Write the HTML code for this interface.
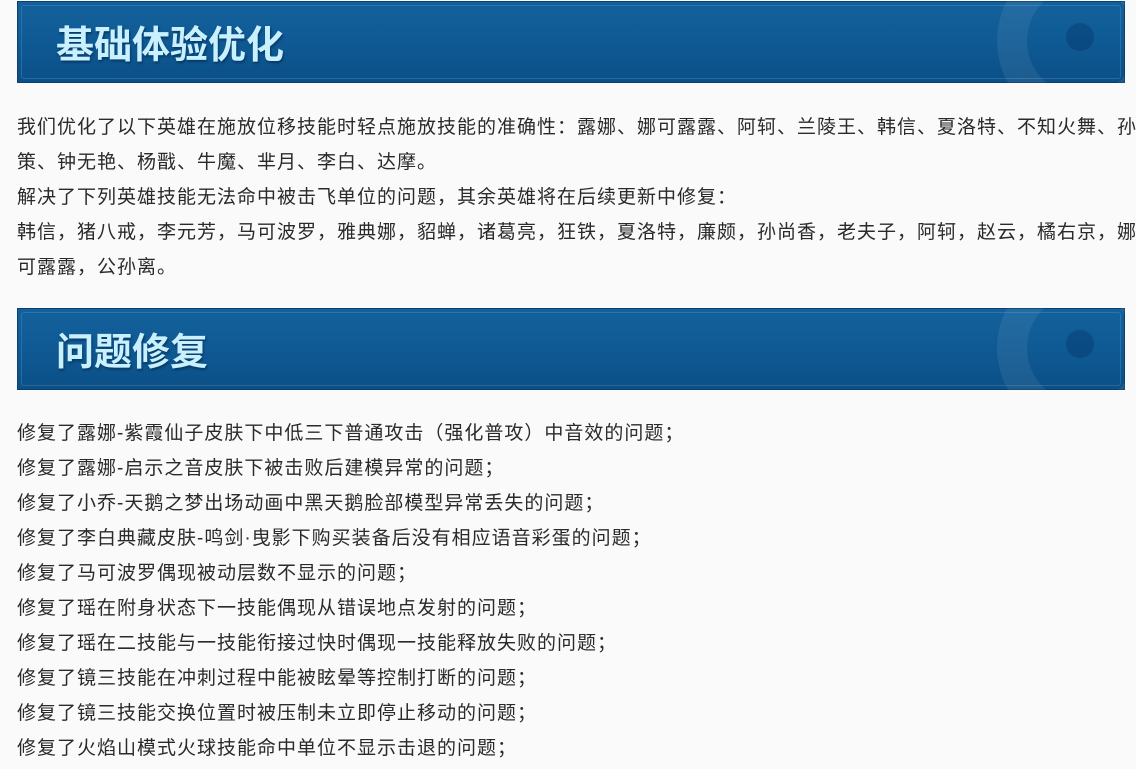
<!DOCTYPE html>
<html><head><meta charset="utf-8"><style>
html,body{margin:0;padding:0;background:#fafafa;width:1136px;height:769px;overflow:hidden}
body{font-family:"Liberation Sans","Noto Sans CJK SC",sans-serif;color:#2a2a2a}
.ban{position:absolute;left:17px;width:1108px;height:82px;background:linear-gradient(180deg,#13619c 0%,#0f5a94 50%,#0b4f86 100%);box-shadow:inset 0 0 0 1px #0a3f6e;overflow:hidden}
.ban:before{content:"";position:absolute;left:4px;top:4px;right:4px;bottom:4px;border:1px solid rgba(120,180,230,.25);border-radius:3px}
.ban .t{position:absolute;left:39px;top:22px;font-size:38px;font-weight:bold;color:#c9f0ff;line-height:46px;text-shadow:1px 2px 2px #063a66;white-space:nowrap}
.ban .c1{position:absolute;left:980px;top:-45px;width:170px;height:170px;border-radius:50%;border:30px solid rgba(255,255,255,.07);box-sizing:border-box}
.ban .c2{position:absolute;left:1049px;top:22px;width:28px;height:28px;border-radius:50%;background:rgba(0,40,90,.3)}
.p{position:absolute;left:17px;font-size:19px;letter-spacing:1px;line-height:35px;white-space:nowrap}
</style></head><body>
<div class="ban" style="top:1px"><div class="c1"></div><div class="c2"></div><div class="t">基础体验优化</div></div>
<div class="p" style="top:110px">我们优化了以下英雄在施放位移技能时轻点施放技能的准确性：露娜、娜可露露、阿轲、兰陵王、韩信、夏洛特、不知火舞、孙<br>策、钟无艳、杨戬、牛魔、芈月、李白、达摩。<br>解决了下列英雄技能无法命中被击飞单位的问题，其余英雄将在后续更新中修复：<br>韩信，猪八戒，李元芳，马可波罗，雅典娜，貂蝉，诸葛亮，狂铁，夏洛特，廉颇，孙尚香，老夫子，阿轲，赵云，橘右京，娜<br>可露露，公孙离。</div>
<div class="ban" style="top:308px"><div class="c1"></div><div class="c2"></div><div class="t">问题修复</div></div>
<div class="p" style="top:416px">修复了露娜-紫霞仙子皮肤下中低三下普通攻击（强化普攻）中音效的问题；<br>修复了露娜-启示之音皮肤下被击败后建模异常的问题；<br>修复了小乔-天鹅之梦出场动画中黑天鹅脸部模型异常丢失的问题；<br>修复了李白典藏皮肤-鸣剑·曳影下购买装备后没有相应语音彩蛋的问题；<br>修复了马可波罗偶现被动层数不显示的问题；<br>修复了瑶在附身状态下一技能偶现从错误地点发射的问题；<br>修复了瑶在二技能与一技能衔接过快时偶现一技能释放失败的问题；<br>修复了镜三技能在冲刺过程中能被眩晕等控制打断的问题；<br>修复了镜三技能交换位置时被压制未立即停止移动的问题；<br>修复了火焰山模式火球技能命中单位不显示击退的问题；</div>
</body></html>
